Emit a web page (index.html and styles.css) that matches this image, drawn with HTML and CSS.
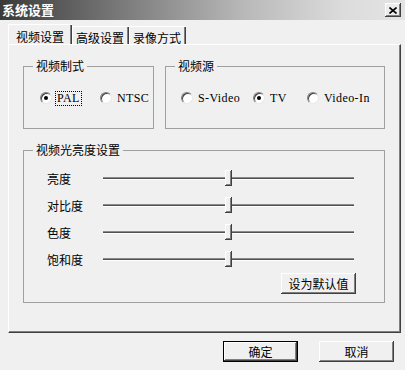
FILE: index.html
```html
<!DOCTYPE html>
<html lang="zh-CN">
<head>
<meta charset="utf-8">
<title>系统设置</title>
<link rel="stylesheet" href="styles.css">
</head>
<body>
<div class="window">
  <div class="titlebar">
    <span class="title">系统设置</span>
    <span class="close"><svg width="8" height="7" viewBox="0 0 8 7"><path d="M0.5 0.5 L7.5 6.5 M7.5 0.5 L0.5 6.5" stroke="#000" stroke-width="1.6" fill="none"/></svg></span>
  </div>
  <div class="tabs">
    <div class="tab active">视频设置</div>
    <div class="tab">高级设置</div>
    <div class="tab">录像方式</div>
  </div>
  <div class="panel">
    <div class="top-row">
      <fieldset class="group g-format">
        <legend>视频制式</legend>
        <div class="radios r-format">
          <label class="radio"><span class="circle on"></span><span class="lbl focus">PAL</span></label>
          <label class="radio"><span class="circle"></span><span class="lbl">NTSC</span></label>
        </div>
      </fieldset>
      <fieldset class="group g-source">
        <legend>视频源</legend>
        <div class="radios r-source">
          <label class="radio"><span class="circle"></span><span class="lbl">S-Video</span></label>
          <label class="radio"><span class="circle on"></span><span class="lbl">TV</span></label>
          <label class="radio"><span class="circle"></span><span class="lbl">Video-In</span></label>
        </div>
      </fieldset>
    </div>
    <fieldset class="group g-bright">
      <legend>视频光亮度设置</legend>
      <div class="sliders">
        <div class="slider-row"><span class="s-label">亮度</span><div class="track"><span class="thumb" style="left:48.6%"></span></div></div>
        <div class="slider-row"><span class="s-label">对比度</span><div class="track"><span class="thumb" style="left:48.6%"></span></div></div>
        <div class="slider-row"><span class="s-label">色度</span><div class="track"><span class="thumb" style="left:48.6%"></span></div></div>
        <div class="slider-row"><span class="s-label">饱和度</span><div class="track"><span class="thumb" style="left:48.6%"></span></div></div>
      </div>
      <div class="defaults"><button class="btn">设为默认值</button></div>
    </fieldset>
  </div>
  <div class="footer">
    <button class="btn default">确定</button>
    <button class="btn">取消</button>
  </div>
</div>
</body>
</html>
```

FILE: styles.css
```css
* { box-sizing: border-box; }
body {
  margin: 0;
  background: #f0f0f0;
  font: 12px "Noto Sans CJK SC", "Liberation Sans", sans-serif;
  color: #000;
}
.window { width: 405px; height: 370px; }

.titlebar {
  height: 20px;
  display: flex;
  align-items: center;
  justify-content: space-between;
  padding: 0 4px 0 2px;
  background: linear-gradient(to right, #3a3a3a 0%, #7a7a7a 30%, #b8b8b8 60%, #dcdcdc 85%, #e4e4e4 100%);
}
.title {
  color: #fff;
  font-weight: bold;
  font-size: 13px;
  line-height: 20px;
}
.close {
  width: 16px;
  height: 14px;
  background: #ececec;
  box-shadow: inset -1px -1px #404040, inset 1px 1px #fff, inset -2px -2px #808080;
  display: flex;
  align-items: center;
  justify-content: center;
}
.close svg { display: block; }

.tabs {
  display: flex;
  align-items: flex-end;
  height: 24px;
  padding-left: 8px;
}
.tab {
  height: 18px;
  padding: 5px 5px 0 4px;
  line-height: 14px;
  box-shadow: inset 1px 1px #fff, inset -1px 0 #404040, inset -2px 0 #808080;
}
.tab.active {
  height: 20px;
  padding: 6px 8px 0 8px;
}

.panel {
  margin-left: 8px;
  width: 393px;
  height: 289px;
  border: 1px solid;
  border-color: #fff #404040 #404040 #fff;
  box-shadow: inset -1px -1px #808080;
  padding: 14px 15px 0 14px;
}
.top-row {
  display: flex;
  gap: 11px;
}
.group {
  margin: 0;
  border: 1px solid #a0a0a0;
  padding: 0 8px 0 9px;
  min-width: 0;
}
.group legend {
  padding: 0 3px;
  line-height: 14px;
  font-size: 12px;
}
.g-format { width: 131px; height: 70px; }
.g-source { flex: 1; height: 70px; }

.radios {
  display: grid;
  align-items: center;
  height: 14px;
  margin-top: 18px;
  margin-left: 7px;
}
.r-format { grid-template-columns: 60px auto; }
.r-source { grid-template-columns: 72px 54px auto; margin-left: 6px; }
.radio {
  display: flex;
  align-items: center;
  gap: 4px;
}
.circle {
  width: 12px;
  height: 12px;
  border-radius: 50%;
  border: 1px solid;
  border-color: #808080 #e8e8e8 #e8e8e8 #808080;
  background: #fff;
  box-shadow: inset 1px 1px #404040;
  display: flex;
  align-items: center;
  justify-content: center;
}
.circle.on::after {
  content: "";
  width: 4px;
  height: 4px;
  border-radius: 50%;
  background: #000;
}
.lbl {
  font-family: "Liberation Serif", serif;
  font-size: 12px;
  letter-spacing: 0.4px;
  line-height: 13px;
  padding: 0 1px;
}
.lbl.focus { outline: 1px dotted #000; }

.g-bright {
  margin-top: 14px;
  height: 160px;
}
.sliders { padding-top: 8px; margin-left: 14px; }
.slider-row {
  display: flex;
  align-items: center;
  height: 27px;
}
.s-label { width: 56px; line-height: 14px; }
.track {
  position: relative;
  width: 251px;
  height: 3px;
  background: #505050;
  border-top: 1px solid #8a8a8a;
  border-bottom: 1px solid #fff;
}
.thumb {
  position: absolute;
  top: -8px;
  width: 7px;
  height: 16px;
  background: #f0f0f0;
  box-shadow: inset -1px -1px #404040, inset 1px 1px #fff, inset -2px -2px #808080;
}
.defaults {
  display: flex;
  justify-content: flex-end;
  margin-right: 20px;
}

.btn {
  width: 75px;
  height: 21px;
  padding: 0;
  border: none;
  background: #f0f0f0;
  font: 12px "Noto Sans CJK SC", sans-serif;
  color: #000;
  box-shadow: inset -1px -1px #404040, inset 1px 1px #fff, inset -2px -2px #808080;
}
.btn.default { border: 1px solid #000; }

.footer {
  display: flex;
  justify-content: flex-end;
  gap: 21px;
  padding: 8px 11px 0 0;
}
```
